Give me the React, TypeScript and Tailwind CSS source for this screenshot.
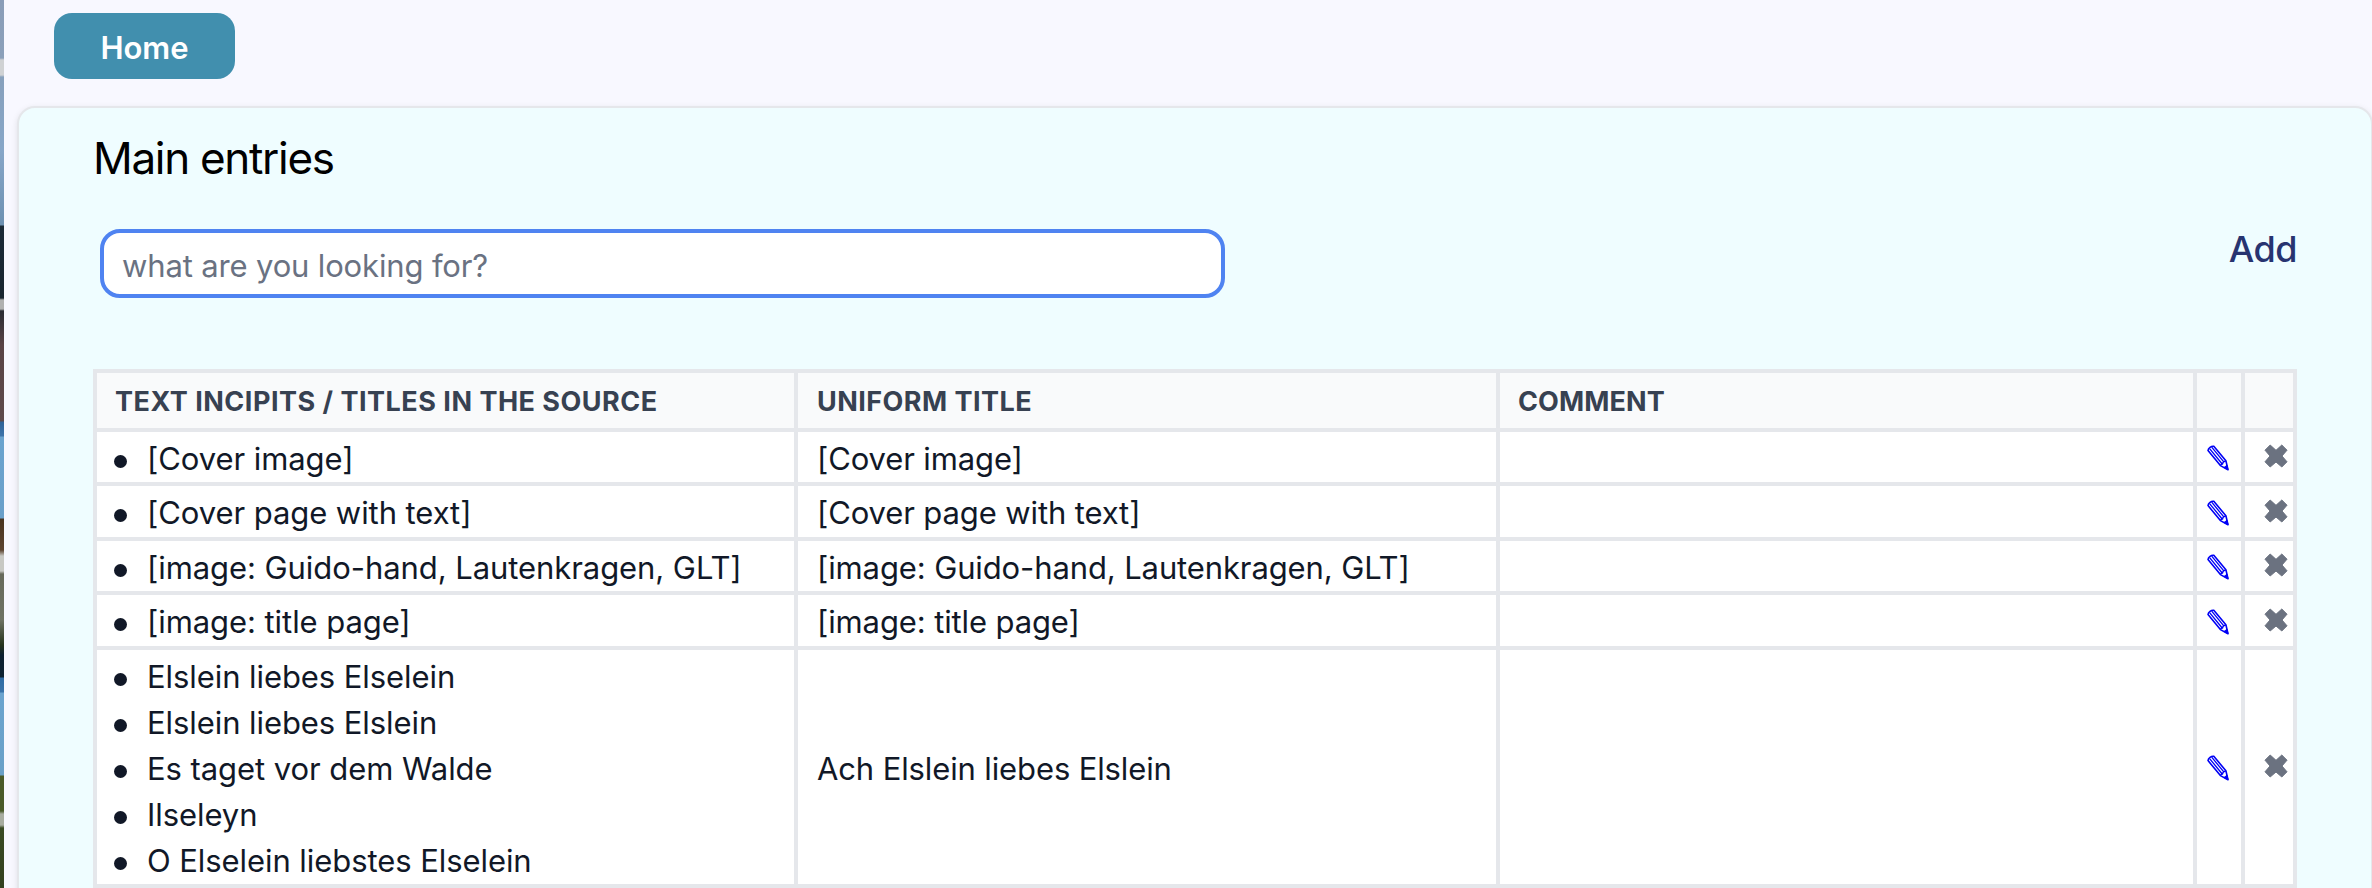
import React from "react";

type Entry = { incipits: string[]; title: string; height: string };

const entries: Entry[] = [
  { incipits: ["[Cover image]"], title: "[Cover image]", height: "h-[54px]" },
  { incipits: ["[Cover page with text]"], title: "[Cover page with text]", height: "h-[55px]" },
  {
    incipits: ["[image: Guido-hand, Lautenkragen, GLT]"],
    title: "[image: Guido-hand, Lautenkragen, GLT]",
    height: "h-[54px]",
  },
  { incipits: ["[image: title page]"], title: "[image: title page]", height: "h-[55px]" },
  {
    incipits: [
      "Elslein liebes Elselein",
      "Elslein liebes Elslein",
      "Es taget vor dem Walde",
      "Ilseleyn",
      "O Elselein liebstes Elselein",
    ],
    title: "Ach Elslein liebes Elslein",
    height: "h-[238px]",
  },
];

const columns = "grid grid-cols-[701px_702px_697px_48px_52px]";
const cell = "border-r-4 border-b-4 border-[#e5e7eb]";

function Pencil() {
  return (
    <svg width="22" height="26" viewBox="0 0 22 26" fill="none" stroke="#0000f5" aria-hidden="true">
      <path d="M1 5.6C1.2 3.2 4.3.8 6.8 1.3L18.9 15.8 21 24.7 13.4 20.6Z" strokeWidth="1.6" strokeLinejoin="round" />
      <path d="M2.8 3.8 15.2 19M4.7 2.2 17 17.2M13.4 20.6C14 19 14.2 18.9 15.5 19 15.6 17.3 16.8 16.2 18.9 15.8" strokeWidth="1.3" />
      <path d="M21 24.7 20 20.2 17 22.5Z" fill="#0000f5" strokeWidth="1" />
    </svg>
  );
}

function Cross() {
  return (
    <svg width="24" height="24" viewBox="0 0 24 24" fill="#6b7280" aria-hidden="true">
      <path d="M6.2 1 12 6.3 17.8 1 23 6.2 18 12 23 17.8 17.8 23 12 18 6.2 23 1 17.8 6 12 1 6.2Z" stroke="#6b7280" strokeLinejoin="round" />
    </svg>
  );
}

export default function App() {
  return (
    <div className="flex h-[888px] w-[2372px] overflow-hidden bg-[#f8f8ff] font-['Inter','Liberation_Sans',sans-serif]">
      <div className="w-1 shrink-0 bg-[linear-gradient(#8a9db8_0px,#8ba0ba_58px,#d0d2d4_60px,#d0d2d4_75px,#87a0bc_77px,#87a6c8_150px,#6d90b2_225px,#1c2a38_226px,#182430_298px,#b0b0b0_300px,#b0b0b0_309px,#2a2c34_311px,#5a4346_345px,#5f4a4c_421px,#2f6398_422px,#3f74ab_436px,#6ba3cf_437px,#6a9fca_518px,#4a3420_519px,#5c4330_550px,#c8c8c4_556px,#c8c8c4_571px,#686a5c_574px,#6f7264_620px,#26331c_645px,#0d2031_655px,#0e2233_677px,#2f6ba5_678px,#3a72aa_692px,#6ba3cf_693px,#6aa0c8_775px,#4a5a2a_776px,#4a5a2a_811px,#a8aca0_814px,#a8aca0_825px,#3a4a24_828px,#33401f_888px)]" />
      <div className="flex grow flex-col">
        <nav className="flex h-[106px] shrink-0 items-start pt-[13px] pl-[50px]">
          <button className="h-[66px] w-[181px] rounded-[18px] bg-[#418fae] pt-0.5 text-[31px] leading-[66px] font-semibold text-white">
            Home
          </button>
        </nav>
        <main className="ml-[13px] h-[900px] w-[2356px] shrink-0 rounded-t-[18px] border-2 border-[#e5e7eb] bg-[#effdff] pl-[74px] shadow-[0_2px_6px_rgba(0,0,0,0.1)]">
          <h1 className="pt-[18px] text-[44px] leading-[64px] tracking-[-1.3px] text-black">Main entries</h1>
          <div className="flex h-[179px] w-[2204px] items-start justify-between pt-[39px]">
            <input
              className="ml-[7px] h-[69px] w-[1125px] rounded-[20px] border-4 border-[#4f83f1] bg-white px-[18px] pt-[3px] text-[31px] tracking-[-0.15px] text-gray-500 outline-none placeholder:text-gray-500"
              placeholder="what are you looking for?"
            />
            <a className="text-[36px] leading-[40px] font-medium tracking-[-0.5px] text-[#273470]">Add</a>
          </div>
          <section className="w-[2204px] border-t-4 border-l-4 border-[#e5e7eb] bg-white text-[31px] tracking-[-0.07px] text-[#111827]">
            <div className={`${columns} h-[59px] bg-[#f9fafb] text-[27px] leading-[57px] font-bold text-[#374151]`}>
              <div className={`${cell} h-[59px] pl-[18px] tracking-[0.5px]`}>TEXT INCIPITS / TITLES IN THE SOURCE</div>
              <div className={`${cell} h-[59px] pl-[19px] tracking-[0.45px]`}>UNIFORM TITLE</div>
              <div className={`${cell} h-[59px] pl-[18px] tracking-[0.1px]`}>COMMENT</div>
              <div className={`${cell} h-[59px]`} />
              <div className={`${cell} h-[59px]`} />
            </div>
            {entries.map((entry) => (
              <div key={entry.title} className={`${columns} ${entry.height}`}>
                <ul className={`${cell} flex flex-col pt-1`}>
                  {entry.incipits.map((text) => (
                    <li key={text} className="flex h-[46px] items-center pl-[17px] leading-[46px] whitespace-nowrap">
                      <span className="mt-1 mr-[20px] size-[13px] rounded-full bg-[#111827]" />
                      {text}
                    </li>
                  ))}
                </ul>
                <div className={`${cell} flex items-center pt-[3px] pl-[19px] leading-[46px] tracking-[-0.12px]`}>
                  {entry.title}
                </div>
                <div className={cell} />
                <div className={`${cell} flex items-center pt-[2px] pl-[10px]`}>
                  <Pencil />
                </div>
                <div className={`${cell} flex items-center justify-end pr-[5px] pb-0.5`}>
                  <Cross />
                </div>
              </div>
            ))}
          </section>
        </main>
      </div>
    </div>
  );
}
